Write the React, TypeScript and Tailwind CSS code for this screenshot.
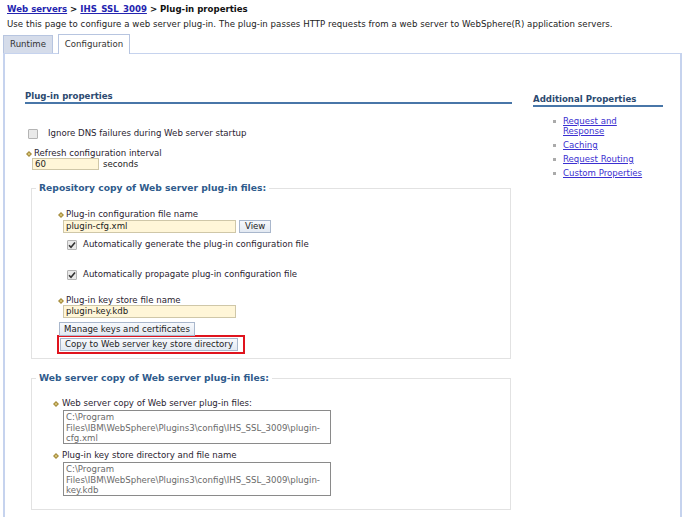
import React from "react";

const Req = () => (
  <svg width="6" height="6" viewBox="0 0 6 6" className="inline-block shrink-0">
    <path d="M3 0 L6 3 L3 6 L0 3 Z" fill="#a38a3a" />
    <path d="M3 1.5 L4.5 3 L3 4.5 L1.5 3 Z" fill="#d9c67a" />
  </svg>
);

const Check = ({ checked }: { checked?: boolean }) => (
  <span className="inline-flex w-[10px] h-[10px] border border-[#b4b4b4] bg-[#e9e9e9] rounded-[1px] items-center justify-center shrink-0">
    {checked && (
      <svg width="8" height="8" viewBox="0 0 8 8">
        <path d="M1 4.2 L3 6.3 L7 1.5" stroke="#333" strokeWidth="1.6" fill="none" />
      </svg>
    )}
  </span>
);

const Btn = ({ children, className = "" }: { children: React.ReactNode; className?: string }) => (
  <span
    className={
      "inline-block border border-[#a9b7cc] bg-gradient-to-b from-[#f7f9fc] to-[#e3e9f2] text-[#222] px-[4px] leading-[11px] " +
      className
    }
  >
    {children}
  </span>
);

export default function App() {
  const label = "text-[#2a2330]";
  return (
    <div className="w-[686px] h-[517px] overflow-hidden bg-white font-['DejaVu_Sans',sans-serif] text-[8.6px] text-[#222] leading-[11px]">
      <div className="pl-[7px] pt-[4px] font-bold text-[#111]">
        <span className="text-[#2424b0] underline">Web servers</span> &gt;{" "}
        <span className="text-[#2424b0] underline">IHS_SSL_3009</span> &gt; Plug-in properties
      </div>
      <div className="pl-[7px] mt-[4px] text-[#222] tracking-[0.05px]">
        Use this page to configure a web server plug-in. The plug-in passes HTTP requests from a web server to
        WebSphere(R) application servers.
      </div>
      <div className="flex items-end pl-[3px] mt-[4px] h-[19px]">
        <div className="h-[18px] w-[50px] bg-[#d5dcea] border border-[#b7c5e0] border-b-0 flex items-center justify-center text-[#333]">
          Runtime
        </div>
        <div className="ml-[5px] h-[20px] w-[72px] bg-white border border-[#b7c5e0] border-b-0 flex items-center justify-center text-[#333] relative top-[1px]">
          Configuration
        </div>
      </div>
      <div className="ml-[3px] w-[679px] h-[480px] border-t border-l-2 border-r-2 border-[#c6d3ee] flex">
        <div className="w-[508px] pl-[20px] pt-[37px]">
          <div className="font-bold text-[#2c4a70] border-b-2 border-[#4876a8] w-[487px] leading-[11px] pb-[0px]">
            Plug-in properties
          </div>
          <div className="flex items-center mt-[24px] ml-[3px]">
            <Check />
            <span className={"ml-[10px] " + label}>Ignore DNS failures during Web server startup</span>
          </div>
          <div className="flex items-center mt-[9px] ml-[1px]">
            <Req />
            <span className={"ml-[2px] " + label}>Refresh configuration interval</span>
          </div>
          <div className="flex items-center ml-[7px] -mt-[1px]">
            <span className="w-[67px] h-[12px] bg-[#fff6d8] border border-[#cfc7a8] pl-[2px] leading-[10px]">60</span>
            <span className="ml-[4px]">seconds</span>
          </div>
          <fieldset className="border border-[#e2e2e2] w-[480px] ml-[6px] mt-[12px] pl-[4px] h-[177px]">
            <legend className="px-[3px] text-[9.2px] font-bold text-[#2f5b8c] leading-[12px]">
              Repository copy of Web server plug-in files:
            </legend>
            <div className="pl-[22px] pt-[15px]">
              <div className="flex items-center">
                <Req />
                <span className={"ml-[2px] " + label}>Plug-in configuration file name</span>
              </div>
              <div className="flex items-center ml-[5px]">
                <span className="w-[173px] h-[13px] bg-[#fff6d8] border border-[#cfc7a8] pl-[2px] leading-[11px]">
                  plugin-cfg.xml
                </span>
                <Btn className="ml-[3px] px-[5px]">View</Btn>
              </div>
              <div className="flex items-center mt-[6px] ml-[9px]">
                <Check checked />
                <span className={"ml-[6px] " + label}>Automatically generate the plug-in configuration file</span>
              </div>
              <div className="flex items-center mt-[19px] ml-[9px]">
                <Check checked />
                <span className={"ml-[6px] " + label}>Automatically propagate plug-in configuration file</span>
              </div>
              <div className="flex items-center mt-[15px]">
                <Req />
                <span className={"ml-[2px] " + label}>Plug-in key store file name</span>
              </div>
              <div className="flex items-center ml-[5px] -mt-[1px]">
                <span className="w-[173px] h-[13px] bg-[#fff6d8] border border-[#cfc7a8] pl-[2px] leading-[11px]">
                  plugin-key.kdb
                </span>
              </div>
              <div className="mt-[4px] ml-[1px]">
                <Btn className="leading-[12px]">Manage keys and certificates</Btn>
              </div>
              <div className="-ml-[1px] border-2 border-[#e0141e] w-[188px] p-[1px] -mt-[1px]">
                <Btn className="leading-[11px] whitespace-nowrap">Copy to Web server key store directory</Btn>
              </div>
            </div>
          </fieldset>
          <fieldset className="border border-[#e2e2e2] w-[480px] ml-[6px] mt-[13px] pl-[4px] h-[138px]">
            <legend className="px-[3px] text-[9.2px] font-bold text-[#2f5b8c] leading-[12px]">
              Web server copy of Web server plug-in files:
            </legend>
            <div className="pl-[17px] pt-[14px]">
              <div className="flex items-center">
                <Req />
                <span className={"ml-[3px] " + label}>Web server copy of Web server plug-in files:</span>
              </div>
              <div className="ml-[10px] mt-[1px] w-[268px] h-[34px] border border-[#8a8a8a] text-[#6a6a6a] px-[2px] leading-[10.5px] pt-[1px]">
                C:\Program
                <br />
                Files\IBM\WebSphere\Plugins3\config\IHS_SSL_3009\plugin-
                <br />
                cfg.xml
              </div>
              <div className="flex items-center mt-[6px]">
                <Req />
                <span className={"ml-[3px] " + label}>Plug-in key store directory and file name</span>
              </div>
              <div className="ml-[10px] mt-[1px] w-[268px] h-[34px] border border-[#8a8a8a] text-[#6a6a6a] px-[2px] leading-[10.5px] pt-[1px]">
                C:\Program
                <br />
                Files\IBM\WebSphere\Plugins3\config\IHS_SSL_3009\plugin-
                <br />
                key.kdb
              </div>
            </div>
          </fieldset>
        </div>
        <div className="ml-[20px] pt-[40px] w-[130px]">
          <div className="font-bold text-[#2c4a70] border-b-2 border-[#4876a8] leading-[11px]">
            Additional Properties
          </div>
          <ul className="mt-[9px] pl-[20px] text-[#3b2fd0]">
            {[["Request and", "Response"], ["Caching"], ["Request Routing"], ["Custom Properties"]].map((l, i) => (
              <li key={i} className="flex mb-[4px]">
                <span className="w-[3px] h-[3px] bg-[#aaa] mt-[4px] mr-[7px] shrink-0" />
                <span className="underline leading-[10px]">
                  {l[0]}
                  {l[1] && (
                    <>
                      <br />
                      {l[1]}
                    </>
                  )}
                </span>
              </li>
            ))}
          </ul>
        </div>
      </div>
    </div>
  );
}
